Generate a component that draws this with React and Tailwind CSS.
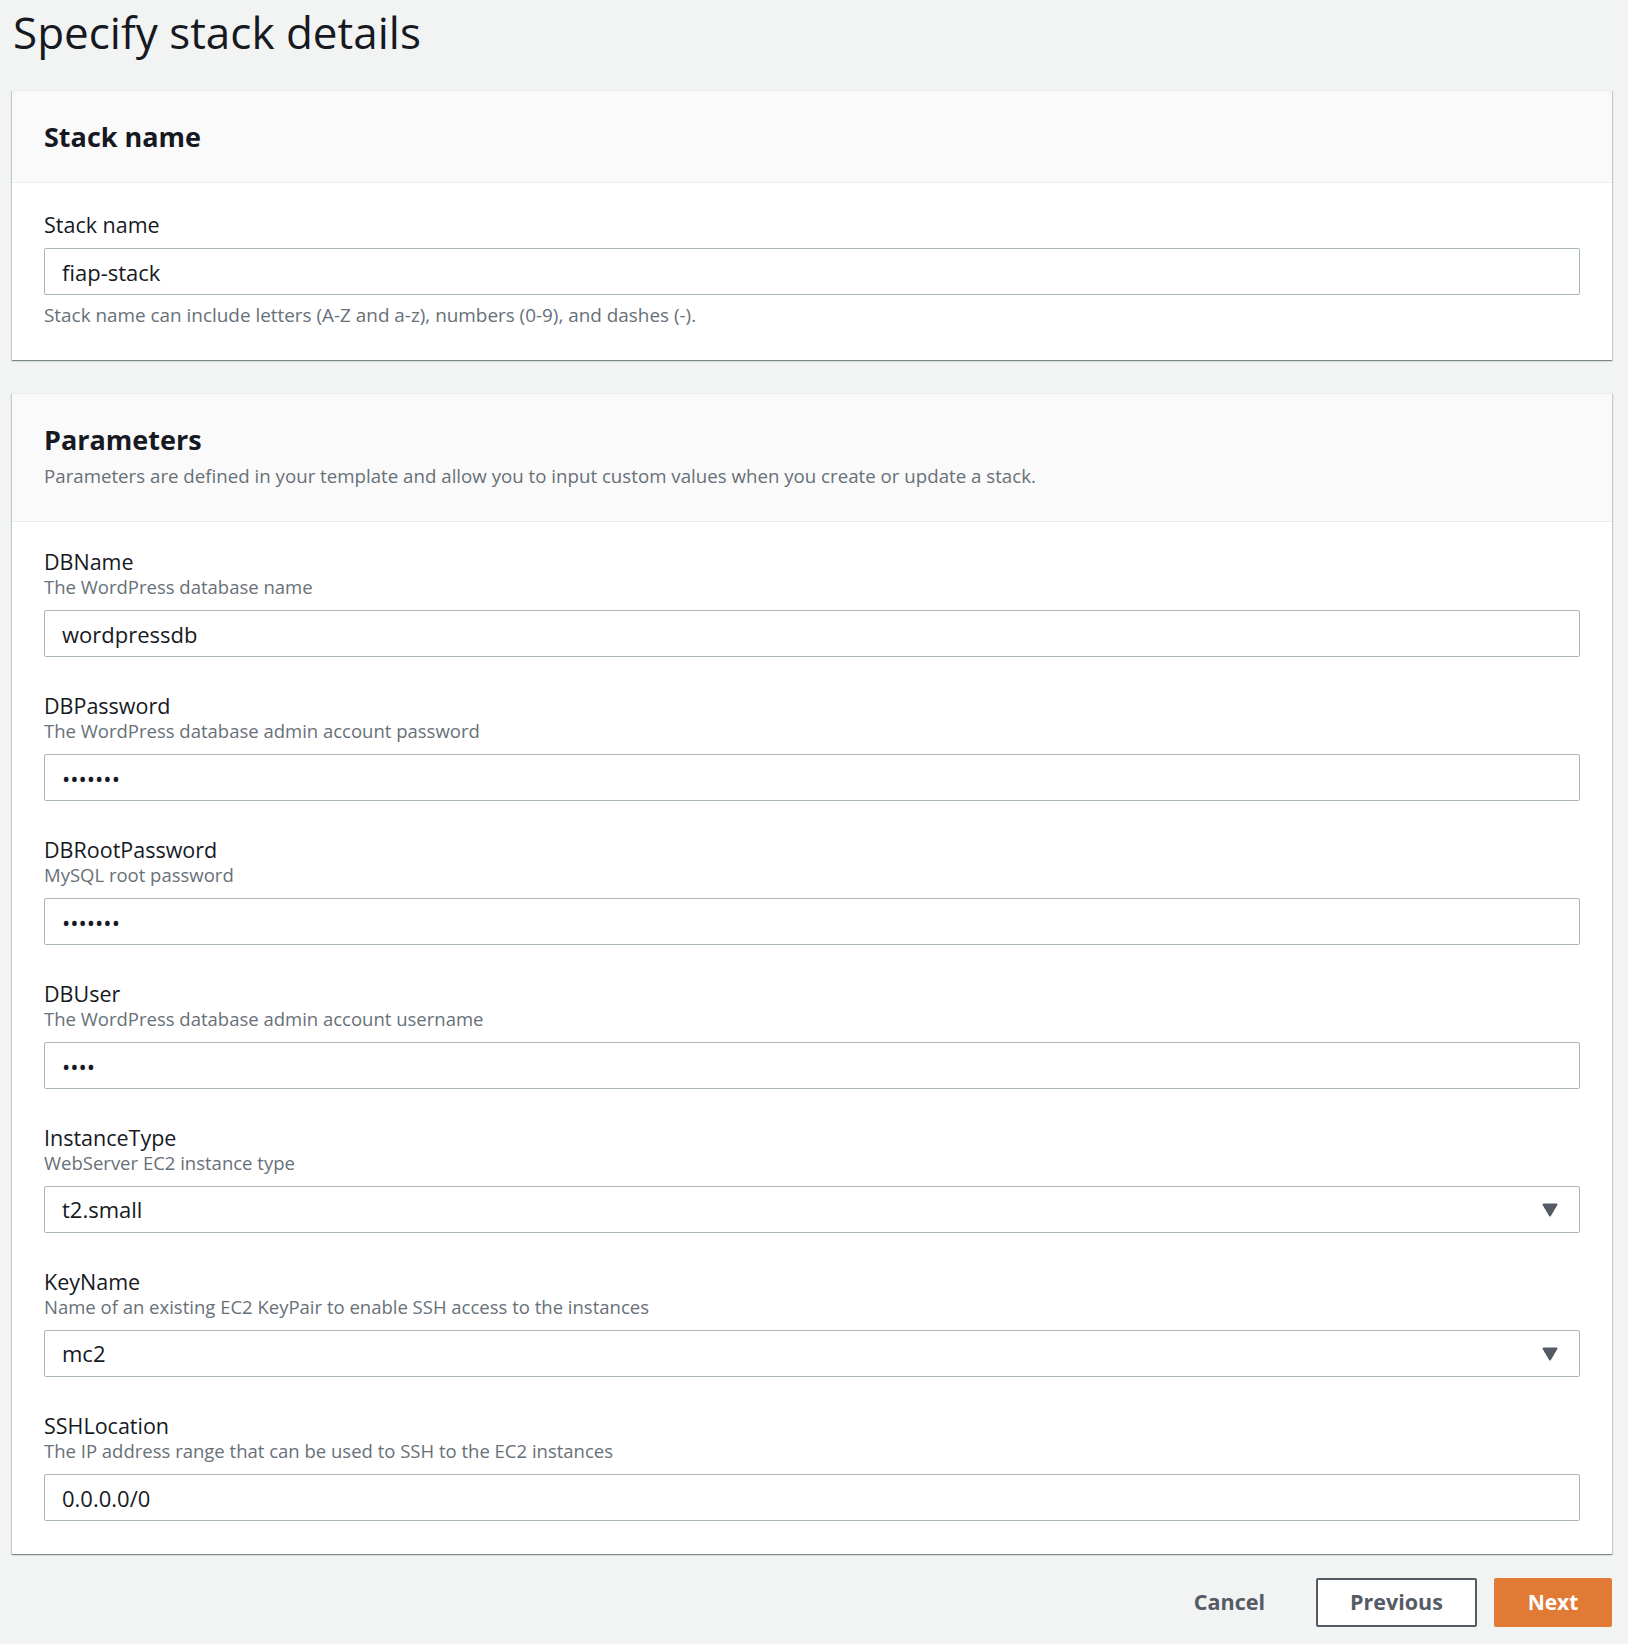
import React from 'react';

const fields = [
  { label: 'DBName', desc: 'The WordPress database name', value: 'wordpressdb' },
  { label: 'DBPassword', desc: 'The WordPress database admin account password', value: 'wpadmin', type: 'password' },
  { label: 'DBRootPassword', desc: 'MySQL root password', value: 'wproot1', type: 'password' },
  { label: 'DBUser', desc: 'The WordPress database admin account username', value: 'user', type: 'password' },
  { label: 'InstanceType', desc: 'WebServer EC2 instance type', value: 't2.small', select: true },
  { label: 'KeyName', desc: 'Name of an existing EC2 KeyPair to enable SSH access to the instances', value: 'mc2', select: true },
  { label: 'SSHLocation', desc: 'The IP address range that can be used to SSH to the EC2 instances', value: '0.0.0.0/0' },
];

function Caret() {
  return (
    <svg width="16" height="14" viewBox="0 0 16 14" className="shrink-0">
      <path d="M1.5 1.5h13L8 12.5z" fill="#545b64" stroke="#545b64" strokeWidth="2" strokeLinejoin="round" />
    </svg>
  );
}

function TextInput({ value, type = 'text' }) {
  return (
    <input
      type={type}
      readOnly
      value={value}
      className="block w-full h-[47px] border border-[#aab7b8] rounded-[2px] bg-white px-[17px] text-[22px] text-[#16191f] outline-none"
    />
  );
}

function SelectInput({ value }) {
  return (
    <div className="flex items-center justify-between w-full h-[47px] border border-[#aab7b8] rounded-[2px] bg-white pl-[17px] pr-[21px] text-[22px] text-[#16191f]">
      <span>{value}</span>
      <Caret />
    </div>
  );
}

function Card({ title, description, children, headerBottom = 'pb-[28px]' }) {
  return (
    <div className="bg-white border-t border-[#eaeded] shadow-[0_1px_1px_0_rgba(0,28,36,0.3),1px_1px_1px_0_rgba(0,28,36,0.15),-1px_1px_1px_0_rgba(0,28,36,0.15)]">
      <div className={`bg-[#fafafa] border-b border-[#eaeded] px-8 pt-[29px] ${headerBottom}`}>
        <h2 className="text-[27px] leading-[34px] font-bold text-[#16191f]">{title}</h2>
        {description && (
          <p className="mt-[7px] text-[18.7px] leading-[24px] text-[#687078]">{description}</p>
        )}
      </div>
      {children}
    </div>
  );
}

export default function App() {
  return (
    <div className="min-h-screen bg-[#f2f3f3] pl-[12px] pr-[16px] pt-[4px] pb-[17px] font-['Open_Sans',sans-serif] text-[#16191f]">
      <h1 className="pl-px text-[44px] leading-[56px] font-normal mb-[30px]">Specify stack details</h1>

      {/* Stack name */}
      <Card title="Stack name">
        <div className="px-8 pt-[29px] pb-[33px]">
          <label className="block text-[21.5px] leading-[26px]">Stack name</label>
          <div className="mt-[10px]">
            <TextInput value="fiap-stack" />
          </div>
          <p className="mt-[8px] text-[18.9px] leading-[24px] text-[#687078]">
            Stack name can include letters (A-Z and a-z), numbers (0-9), and dashes (-).
          </p>
        </div>
      </Card>

      {/* Parameters */}
      <div className="mt-[33px]">
        <Card
          title="Parameters"
          description="Parameters are defined in your template and allow you to input custom values when you create or update a stack."
          headerBottom="pb-[33px]"
        >
          <div className="px-8 pt-[27px] pb-[33px] flex flex-col gap-[36px]">
            {fields.map((f) => (
              <div key={f.label}>
                <label className="block text-[21.5px] leading-[26px]">{f.label}</label>
                <p className="text-[18.5px] leading-[24px] text-[#687078]">{f.desc}</p>
                <div className="mt-[11px]">
                  {f.select ? <SelectInput value={f.value} /> : <TextInput value={f.value} type={f.type} />}
                </div>
              </div>
            ))}
          </div>
        </Card>
      </div>

      {/* Actions */}
      <div className="mt-[24px] flex justify-end gap-[17px]">
        <button className="h-[49px] px-[34px] text-[21.5px] font-bold text-[#545b64]">Cancel</button>
        <button className="h-[49px] w-[161px] border-2 border-[#545b64] rounded-[2px] bg-white text-[21.5px] font-bold text-[#545b64]">
          Previous
        </button>
        <button className="h-[49px] w-[118px] rounded-[2px] bg-[#e07a35] text-[21px] font-bold text-white">Next</button>
      </div>
    </div>
  );
}
